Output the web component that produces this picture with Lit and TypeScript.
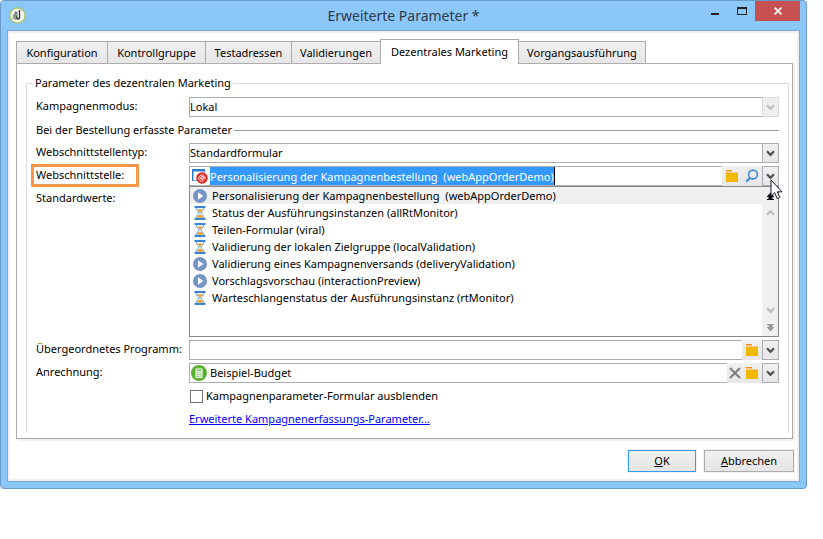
import { LitElement, html, css, svg, nothing } from "lit";
import { customElement, property, state } from "lit/decorators.js";
import { classMap } from "lit/directives/class-map.js";

const folderIcon = html`<svg width="12" height="12" viewBox="0 0 12 12" aria-hidden="true">
  <path d="M0 0h6v2h6v2H0z" fill="#f8c98a"></path>
  <path d="M0 0h6v1H0z" fill="#ee8a1c"></path>
  <path d="M0 3h12v9H0z" fill="#f0b800"></path>
</svg>`;

const searchIcon = html`<svg width="14" height="14" viewBox="0 0 14 14" fill="none" aria-hidden="true">
  <circle cx="8" cy="5.5" r="4.4" stroke="#3d8bd4" stroke-width="1.6"></circle>
  <path d="M5 9L1.2 12.6" stroke="#3d8bd4" stroke-width="2.2"></path>
</svg>`;

const clearIcon = html`<svg width="12" height="12" viewBox="0 0 12 12" aria-hidden="true">
  <path d="M1 1l10 10M11 1L1 11" stroke="#808080" stroke-width="2.2"></path>
</svg>`;

const chevron = html`<svg width="9" height="7" viewBox="0 0 9 7" fill="none" aria-hidden="true">
  <path d="M1 1.2L4.5 4.8L8 1.2" stroke="currentColor" stroke-width="2.2"></path>
</svg>`;

const chevronUp = html`<svg width="9" height="7" viewBox="0 0 9 7" fill="none" aria-hidden="true">
  <path d="M1 5.8L4.5 2.2L8 5.8" stroke="currentColor" stroke-width="2"></path>
</svg>`;

const playIcon = html`<svg width="14" height="14" viewBox="0 0 14 14" aria-hidden="true">
  <circle cx="7" cy="7" r="7" fill="#7595c6"></circle>
  <path d="M5 3.2L10.4 7L5 10.8z" fill="#fff"></path>
</svg>`;

const hourglassIcon = html`<svg width="14" height="14" viewBox="0 0 14 14" aria-hidden="true">
  <path d="M3 1.5C3 5 6 5.6 6 7S3 9 3 12.500h8C11 9 8 8.400 8 7s3-2 3-5.500z" fill="#eef6fd" stroke="#5b9bd5" stroke-width="1"></path>
  <path d="M1.500 0h11v2h-11zM1.500 12h11v2h-11z" fill="#3a86cf"></path>
  <path d="M4.200 3.600h5.600L7 6.800z" fill="#f09a1a"></path>
  <path d="M4 11.800C4.300 9.800 6 9.500 7 8.600c1 .9 2.700 1.200 3 3.200z" fill="#f09a1a"></path>
</svg>`;

const formIcon = html`<svg width="17" height="16" viewBox="0 0 17 16" aria-hidden="true">
  <path d="M1.500 2.500h12v10h-12z" fill="#fff" stroke="#7fb0de"></path>
  <path d="M1 1h13v2.500H1zM1 1h1.500v12H1z" fill="#2d7dc8"></path>
  <circle cx="11" cy="10" r="5.700" fill="#e2231a"></circle>
  <circle cx="11" cy="10" r="1.400" fill="none" stroke="#fff"></circle>
  <path d="M12.500 8.300v2.300c0 1.200 1.700 1 1.700-.7a3.200 3.200 0 1 0-1.500 2.900" fill="none" stroke="#fff" stroke-width=".9"></path>
</svg>`;

const budgetIcon = html`<svg width="16" height="16" viewBox="0 0 16 16" aria-hidden="true">
  <circle cx="8" cy="8" r="8" fill="#5ab031"></circle>
  <path d="M4.500 3.500h7v9.500h-7z" fill="#fff"></path>
  <path d="M5.500 4.500h5v1.500h-5zM5.500 7.200h1.200v1.200H5.500zM7.400 7.200h1.200v1.200H7.400zM9.300 7.200h1.200v1.200H9.300zM5.500 9h1.200v1.200H5.500zM7.400 9h1.200v1.200H7.400zM9.300 9h1.200v1.200H9.300zM5.500 10.800h1.200V12H5.500zM7.400 10.800h1.200V12H7.400zM9.300 10.800h1.200V12H9.300z" fill="#7cc258"></path>
</svg>`;

const appIcon = html`<svg width="17" height="17" viewBox="0 0 17 17" aria-hidden="true">
  <circle cx="8.500" cy="8.500" r="7.700" fill="#f4f6f0" stroke="#9bbf5a" stroke-width="1.200"></circle>
  <path d="M3.500 7.500L7 5.500V12.500L3.500 12z" fill="#a5aaa2"></path>
  <path d="M5.500 4.500h3v7l-2 1.500z" fill="#84897f"></path>
  <path d="M10.500 3v9M7.500 9.500c0 3 3 3.500 3 .5" fill="none" stroke="#333" stroke-width="1.300"></path>
</svg>`;

const endArrow = (down: boolean) => html`<svg width="9" height="8" viewBox="0 0 9 8" aria-hidden="true">
  <g transform=${down ? "rotate(0)" : "rotate(180 4.5 4)"}>
    ${svg`<path d="M1 0h7v1H1zM2.500 1h4v2h-4zM0.500 3h8L4.500 7.500z" fill="currentColor"></path>`}
  </g>
</svg>`;

interface Entry {
  text: string;
  running: boolean;
}

@customElement("combo-field")
export class ComboField extends LitElement {
  @property() label = "";
  @property() value = "";
  @property() icon = "";
  @property({ type: Array }) actions: string[] = [];
  @property({ type: Boolean }) selected = false;

  static styles = css`
    :host {
      display: flex;
      height: 20px;
      min-width: 0;
      font: 11px/16px "Noto Sans", "Open Sans", sans-serif;
    }
    .box {
      flex: 1;
      min-width: 0;
      display: flex;
      align-items: center;
      box-sizing: border-box;
      border: 1px solid #abadb3;
      border-right: 0;
      background: #fff;
    }
    .icon {
      display: flex;
      width: 20px;
      flex: none;
      padding-left: 1px;
      box-sizing: border-box;
    }
    input {
      flex: 1;
      min-width: 0;
      height: 16px;
      margin: 0;
      padding: 0;
      border: 0;
      outline: 0;
      background: none;
      font: inherit;
      color: #000;
    }
    .selected {
      flex: none;
      field-sizing: content;
      height: 18px;
      max-width: 100%;
      background: #3399ff;
      color: #fff;
      border-right: 1px solid #000;
    }
    button {
      width: 20px;
      padding: 0;
      border: 0;
      display: flex;
      align-items: center;
      justify-content: center;
      background: linear-gradient(#f0f0f0, #e6e6e6);
      color: #505050;
    }
    .clear {
      width: 15px;
    }
    .drop {
      width: 17px;
      border: 1px solid #abadb3;
    }
  `;

  render() {
    const kinds: Record<string, { name: string; glyph: unknown }> = {
      clear: { name: "Leeren", glyph: clearIcon },
      folder: { name: "Ordner wählen", glyph: folderIcon },
      search: { name: "Suchen", glyph: searchIcon },
    };
    return html`
      <div class="box">
        ${this.icon ? html`<span class="icon">${this.icon === "form" ? formIcon : budgetIcon}</span>` : nothing}
        <input class=${classMap({ selected: this.selected })} aria-label=${this.label} .value=${this.value} />
      </div>
      ${this.actions.map(
        (a) => html`<button class=${a} aria-label=${kinds[a].name}>${kinds[a].glyph}</button>`
      )}
      <button class="drop" aria-label="Liste öffnen">${chevron}</button>
    `;
  }
}

@customElement("app-root")
export class AppRoot extends LitElement {
  @state() private activeTab = 4;

  private tabs = [
    "Konfiguration",
    "Kontrollgruppe",
    "Testadressen",
    "Validierungen",
    "Dezentrales Marketing",
    "Vorgangsausführung",
  ];

  private entries: Entry[] = [
    { text: "Personalisierung der Kampagnenbestellung  (webAppOrderDemo)", running: true },
    { text: "Status der Ausführungsinstanzen (allRtMonitor)", running: false },
    { text: "Teilen-Formular (viral)", running: false },
    { text: "Validierung der lokalen Zielgruppe (localValidation)", running: false },
    { text: "Validierung eines Kampagnenversands (deliveryValidation)", running: true },
    { text: "Vorschlagsvorschau (interactionPreview)", running: true },
    { text: "Warteschlangenstatus der Ausführungsinstanz (rtMonitor)", running: false },
  ];

  static styles = css`
    :host {
      display: block;
      min-height: 100vh;
      background: #fff;
      color: #000;
      font: 11px/16px "Noto Sans", "Open Sans", sans-serif;
    }
    button,
    select {
      font: inherit;
      color: inherit;
      margin: 0;
    }
    .window {
      margin-right: 16px;
      border: 1px solid #6b9bc8;
      border-radius: 4px;
      background: #8cc7f9;
      padding: 0 6px 6px;
    }
    .titlebar {
      display: grid;
      grid-template-columns: 1fr auto 1fr;
      height: 29px;
    }
    .app-icon {
      display: flex;
      padding: 6px 2px;
    }
    .title {
      margin: 0;
      font-size: 14px;
      line-height: 29px;
      font-weight: 400;
      color: #2c3a48;
    }
    .controls {
      display: flex;
      justify-content: flex-end;
      align-items: flex-start;
    }
    .controls button {
      width: 27px;
      height: 20px;
      padding: 0;
      border: 0;
      background: none;
      display: flex;
      align-items: center;
      justify-content: center;
    }
    .controls .close {
      width: 45px;
      background: #c75050;
    }
    .frame {
      border: 1px solid #79a9d6;
      background: #f0f0f0;
      padding: 2px;
    }
    .client {
      background: #fff;
      padding: 6px 4px 7px 6px;
    }
    .tabs {
      display: grid;
      grid-template-columns: 91px 98px 86px 89px 138px 127px;
      height: 24px;
      align-items: end;
    }
    .tab {
      height: 22px;
      padding: 0;
      border: 1px solid #acacac;
      border-width: 1px 1px 0 1px;
      margin-right: -1px;
      background: linear-gradient(#f0f0f0, #e6e6e6);
      white-space: nowrap;
      display: flex;
      justify-content: center;
      align-items: center;
    }
    .tab.active {
      position: relative;
      height: 25px;
      margin-bottom: -1px;
      background: #fff;
    }
    .panel {
      border: 1px solid #acacac;
      padding: 11px 3px 5px 9px;
      box-shadow: 2px 2px 0 #f0f0f0;
    }
    fieldset {
      margin: 0;
      padding: 0;
      min-width: 0;
      border: 1px solid #dcdcdc;
      border-bottom: 0;
    }
    legend {
      margin-left: 6px;
      padding: 0 2px;
    }
    .form {
      display: grid;
      grid-template-columns: 153px minmax(0, 1fr);
      grid-auto-rows: minmax(20px, auto);
      gap: 3px 0;
      padding: 6px 9px 4px;
    }
    .label {
      line-height: 18px;
      white-space: nowrap;
    }
    .marked {
      outline: 3px solid #f79646;
      outline-offset: 0;
      margin: 1px 53px 2px -2px;
      padding-left: 2px;
      line-height: 16px;
    }
    .section {
      grid-column: 1 / -1;
      display: flex;
      align-items: center;
      gap: 2px;
      margin: 0;
      font: inherit;
    }
    .section::after {
      content: "";
      flex: 1;
      height: 1px;
      background: #a0a0a0;
    }
    .choice {
      display: grid;
      grid-template-columns: minmax(0, 1fr) 17px;
      height: 20px;
    }
    .choice select {
      grid-area: 1 / 1 / 2 / 3;
      appearance: none;
      height: 20px;
      padding: 0 18px 0 0;
      border: 1px solid #abadb3;
      border-radius: 0;
      background: #fff;
      opacity: 1;
    }
    .choice .arrow {
      grid-area: 1 / 2;
      z-index: 1;
      display: flex;
      align-items: center;
      justify-content: center;
      border: 1px solid #abadb3;
      background: linear-gradient(#f0f0f0, #e6e6e6);
      color: #505050;
      pointer-events: none;
    }
    .choice .off {
      border-color: #d9d9d9;
      background: #efefef;
      color: #bfbfbf;
    }
    .combo {
      position: relative;
    }
    .popup {
      position: absolute;
      top: 100%;
      left: 0;
      right: 0;
      z-index: 2;
      height: 151px;
      box-sizing: border-box;
      border: 1px solid #828790;
      background: #fff;
      display: flex;
    }
    .entries {
      flex: 1;
      min-width: 0;
      margin: 0;
      padding: 0;
      list-style: none;
    }
    .entry {
      display: flex;
      align-items: center;
      gap: 5px;
      height: 17px;
      padding-left: 3px;
      white-space: pre;
    }
    .entry.current {
      background: #f0f0f0;
    }
    .scroll {
      width: 16px;
      display: flex;
      flex-direction: column;
      background: #f0f0f0;
      color: #bcbcbc;
    }
    .scroll button {
      height: 17px;
      padding: 0;
      border: 0;
      background: none;
      display: flex;
      align-items: center;
      justify-content: center;
    }
    .scroll .first {
      color: #111;
    }
    .scroll .last {
      color: #999;
    }
    .track {
      flex: 1;
    }
    .pointer {
      position: absolute;
      z-index: 3;
      right: -4px;
      top: 13px;
      pointer-events: none;
    }
    .rest {
      min-height: 148px;
    }
    .second {
      grid-column: 2;
    }
    .check {
      display: flex;
      align-items: center;
      gap: 3px;
      padding-left: 1px;
    }
    .check input {
      appearance: none;
      width: 13px;
      height: 13px;
      margin: 0;
      border: 1px solid #707070;
      background: #fff;
    }
    .link {
      line-height: 20px;
    }
    a {
      color: #0000ff;
    }
    .footer {
      display: flex;
      justify-content: flex-end;
      gap: 8px;
      margin: 11px -1px 0 0;
    }
    .footer button {
      width: 90px;
      height: 22px;
      padding: 0;
      border: 1px solid #acacac;
      background: linear-gradient(#f0f0f0, #e5e5e5);
      box-shadow: 0 0 0 1px #f0f0f0;
    }
    .footer .default {
      width: 68px;
      border-color: #3399ff;
    }
  `;

  render() {
    return html`
      <main class="window">
        <header class="titlebar">
          <span class="app-icon">${appIcon}</span>
          <h1 class="title">Erweiterte Parameter *</h1>
          <div class="controls">
            <button aria-label="Minimieren">
              <svg width="10" height="10" viewBox="0 0 10 10"><path d="M1 7h8v2H1z" fill="#222"></path></svg>
            </button>
            <button aria-label="Maximieren">
              <svg width="10" height="8" viewBox="0 0 10 8">
                <path d="M0 0h10v8H0zM1 2v5h8V2z" fill="#222" fill-rule="evenodd"></path>
              </svg>
            </button>
            <button class="close" aria-label="Schließen">
              <svg width="8" height="8" viewBox="0 0 8 8"><path d="M.6.6l6.800 6.800M7.400.6L.6 7.400" stroke="#fff" stroke-width="1.700"></path></svg>
            </button>
          </div>
        </header>
        <div class="frame">
          <div class="client">
            <nav class="tabs" role="tablist">
              ${this.tabs.map(
                (t, i) => html`<button
                  role="tab"
                  aria-selected=${i === this.activeTab}
                  class=${classMap({ tab: true, active: i === this.activeTab })}
                  @click=${() => (this.activeTab = i)}
                >${t}</button>`
              )}
            </nav>
            <section class="panel">
              <fieldset>
                <legend>Parameter des dezentralen Marketing</legend>
                <div class="form">
                  <label class="label" for="mode">Kampagnenmodus:</label>
                  <div class="choice">
                    <select id="mode"><option>Lokal</option></select>
                    <span class="arrow off">${chevron}</span>
                  </div>
                  <h2 class="section">Bei der Bestellung erfasste Parameter</h2>
                  <label class="label" for="type">Webschnittstellentyp:</label>
                  <div class="choice">
                    <select id="type"><option>Standardformular</option></select>
                    <span class="arrow">${chevron}</span>
                  </div>
                  <span class="label marked">Webschnittstelle:</span>
                  <div class="combo">
                    <combo-field
                      label="Webschnittstelle"
                      icon="form"
                      .value=${this.entries[0].text}
                      .actions=${["folder", "search"]}
                      selected
                    ></combo-field>
                    ${this.renderPopup()}
                    <svg class="pointer" width="13" height="21" viewBox="0 0 13 21" aria-hidden="true">
                      <path d="M1 1v16l3.700-3.400 2.500 6 2.600-1.100-2.500-5.700H12z" fill="#fff" stroke="#1c1c28"></path>
                    </svg>
                  </div>
                  <span class="label rest">Standardwerte:</span>
                  <span></span>
                  <span class="label">Übergeordnetes Programm:</span>
                  <combo-field label="Übergeordnetes Programm" .actions=${["folder"]}></combo-field>
                  <span class="label">Anrechnung:</span>
                  <combo-field
                    label="Anrechnung"
                    icon="budget"
                    value="Beispiel-Budget"
                    .actions=${["clear", "folder"]}
                  ></combo-field>
                  <label class="second check"><input type="checkbox" />Kampagnenparameter-Formular ausblenden</label>
                  <div class="second link"><a href="#parameter">Erweiterte Kampagnenerfassungs-Parameter...</a></div>
                </div>
              </fieldset>
            </section>
            <footer class="footer">
              <button class="default"><u>O</u>K</button>
              <button><u>A</u>bbrechen</button>
            </footer>
          </div>
        </div>
      </main>
    `;
  }

  private renderPopup() {
    return html`<div class="popup">
      <ul class="entries" role="listbox" aria-label="Webschnittstelle">
        ${this.entries.map(
          (e, i) => html`<li
            role="option"
            aria-selected=${i === 0}
            class=${classMap({ entry: true, current: i === 0 })}
          >${e.running ? playIcon : hourglassIcon}<span>${e.text}</span></li>`
        )}
      </ul>
      <div class="scroll">
        <button class="first" aria-label="Zum Anfang">${endArrow(false)}</button>
        <button aria-label="Nach oben">${chevronUp}</button>
        <div class="track"></div>
        <button aria-label="Nach unten">${chevron}</button>
        <button class="last" aria-label="Zum Ende">${endArrow(true)}</button>
      </div>
    </div>`;
  }
}
